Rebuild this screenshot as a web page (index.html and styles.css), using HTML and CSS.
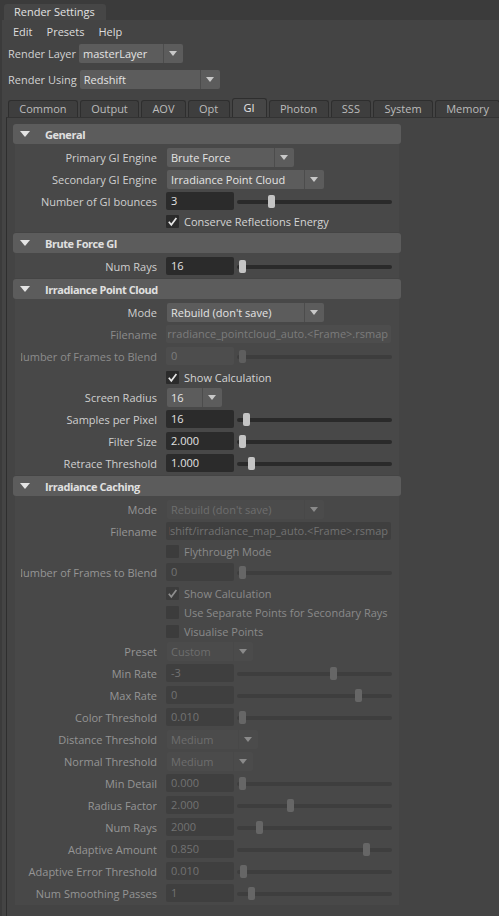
FILE: index.html
```html
<!DOCTYPE html>
<html>
<head>
<meta charset="utf-8">
<title>Render Settings</title>
<link rel="stylesheet" href="styles.css">
</head>
<body>
<div class="titlebar"><div class="title-tab">Render Settings</div></div>
<div class="window">
  <div class="menubar"><span>Edit</span><span>Presets</span><span>Help</span></div>
  <div class="toprow r-layer"><span class="toplabel">Render Layer</span><div class="dd w104"><span class="dd-text">masterLayer</span><span class="dd-arrow"></span></div></div>
  <div class="toprow r-using"><span class="toplabel">Render Using</span><div class="dd w140"><span class="dd-text">Redshift</span><span class="dd-arrow"></span></div></div>
  <div class="tabs">
    <span class="tab">Common</span><span class="tab">Output</span><span class="tab">AOV</span><span class="tab">Opt</span><span class="tab active">GI</span><span class="tab">Photon</span><span class="tab">SSS</span><span class="tab">System</span><span class="tab">Memory</span>
  </div>
  <div class="panel">
    <section class="sec">
      <div class="sec-head"><span class="tri"></span><span class="sec-title">General</span></div>
      <div class="sec-body">
        <div class="row"><div class="lbl"><span>Primary GI Engine</span></div><div class="ctl"><div class="dd w127"><span class="dd-text">Brute Force</span><span class="dd-arrow"></span></div></div></div>
        <div class="row"><div class="lbl"><span>Secondary GI Engine</span></div><div class="ctl"><div class="dd w157"><span class="dd-text">Irradiance Point Cloud</span><span class="dd-arrow"></span></div></div></div>
        <div class="row"><div class="lbl"><span>Number of GI bounces</span></div><div class="ctl"><span class="num">3</span><div class="slider"><span class="knob" style="left:31px"></span></div></div></div>
        <div class="row h19"><div class="lbl"></div><div class="ctl"><span class="cb"><svg viewBox="0 0 13 13"><polyline points="2.8,6.8 5.3,9.8 10.4,3"/></svg></span><span class="cb-text">Conserve Reflections Energy</span></div></div>
      </div>
    </section>
    <section class="sec">
      <div class="sec-head"><span class="tri"></span><span class="sec-title">Brute Force GI</span></div>
      <div class="sec-body">
        <div class="row"><div class="lbl"><span>Num Rays</span></div><div class="ctl"><span class="num">16</span><div class="slider"><span class="knob" style="left:2px"></span></div></div></div>
      </div>
    </section>
    <section class="sec">
      <div class="sec-head"><span class="tri"></span><span class="sec-title">Irradiance Point Cloud</span></div>
      <div class="sec-body">
        <div class="row"><div class="lbl"><span>Mode</span></div><div class="ctl"><div class="dd w157"><span class="dd-text">Rebuild (don't save)</span><span class="dd-arrow"></span></div></div></div>
        <div class="row off"><div class="lbl"><span>Filename</span></div><div class="ctl"><span class="path"><span class="clip"><span>irradiance_pointcloud_auto.&lt;Frame&gt;.rsmap</span></span></span></div></div>
        <div class="row off"><div class="lbl"><span>Number of Frames to Blend</span></div><div class="ctl"><span class="num">0</span><div class="slider"><span class="knob" style="left:2px"></span></div></div></div>
        <div class="row h20"><div class="lbl"></div><div class="ctl"><span class="cb"><svg viewBox="0 0 13 13"><polyline points="2.8,6.8 5.3,9.8 10.4,3"/></svg></span><span class="cb-text">Show Calculation</span></div></div>
        <div class="row h21"><div class="lbl"><span>Screen Radius</span></div><div class="ctl"><div class="dd w55"><span class="dd-text">16</span><span class="dd-arrow"></span></div></div></div>
        <div class="row"><div class="lbl"><span>Samples per Pixel</span></div><div class="ctl"><span class="num">16</span><div class="slider"><span class="knob" style="left:6px"></span></div></div></div>
        <div class="row"><div class="lbl"><span>Filter Size</span></div><div class="ctl"><span class="num">2.000</span><div class="slider"><span class="knob" style="left:2px"></span></div></div></div>
        <div class="row"><div class="lbl"><span>Retrace Threshold</span></div><div class="ctl"><span class="num">1.000</span><div class="slider"><span class="knob" style="left:11px"></span></div></div></div>
      </div>
    </section>
    <section class="sec disabled">
      <div class="sec-head"><span class="tri"></span><span class="sec-title">Irradiance Caching</span></div>
      <div class="sec-body">
        <div class="row"><div class="lbl"><span>Mode</span></div><div class="ctl"><div class="dd w157"><span class="dd-text">Rebuild (don't save)</span><span class="dd-arrow"></span></div></div></div>
        <div class="row"><div class="lbl"><span>Filename</span></div><div class="ctl"><span class="path"><span class="clip"><span>redshift/irradiance_map_auto.&lt;Frame&gt;.rsmap</span></span></span></div></div>
        <div class="row h19"><div class="lbl"></div><div class="ctl"><span class="cb"></span><span class="cb-text">Flythrough Mode</span></div></div>
        <div class="row"><div class="lbl"><span>Number of Frames to Blend</span></div><div class="ctl"><span class="num">0</span><div class="slider"><span class="knob" style="left:2px"></span></div></div></div>
        <div class="row h20"><div class="lbl"></div><div class="ctl"><span class="cb"><svg viewBox="0 0 13 13"><polyline points="2.8,6.8 5.3,9.8 10.4,3"/></svg></span><span class="cb-text">Show Calculation</span></div></div>
        <div class="row h19"><div class="lbl"></div><div class="ctl"><span class="cb"></span><span class="cb-text">Use Separate Points for Secondary Rays</span></div></div>
        <div class="row h19"><div class="lbl"></div><div class="ctl"><span class="cb"></span><span class="cb-text">Visualise Points</span></div></div>
        <div class="row h21"><div class="lbl"><span>Preset</span></div><div class="ctl"><div class="dd w86"><span class="dd-text">Custom</span><span class="dd-arrow"></span></div></div></div>
        <div class="row"><div class="lbl"><span>Min Rate</span></div><div class="ctl"><span class="num">-3</span><div class="slider"><span class="knob" style="left:93px"></span></div></div></div>
        <div class="row"><div class="lbl"><span>Max Rate</span></div><div class="ctl"><span class="num">0</span><div class="slider"><span class="knob" style="left:118px"></span></div></div></div>
        <div class="row"><div class="lbl"><span>Color Threshold</span></div><div class="ctl"><span class="num">0.010</span><div class="slider"><span class="knob" style="left:2px"></span></div></div></div>
        <div class="row"><div class="lbl"><span>Distance Threshold</span></div><div class="ctl"><div class="dd w91"><span class="dd-text">Medium</span><span class="dd-arrow"></span></div></div></div>
        <div class="row"><div class="lbl"><span>Normal Threshold</span></div><div class="ctl"><div class="dd w86"><span class="dd-text">Medium</span><span class="dd-arrow"></span></div></div></div>
        <div class="row"><div class="lbl"><span>Min Detail</span></div><div class="ctl"><span class="num">0.000</span><div class="slider"><span class="knob" style="left:2px"></span></div></div></div>
        <div class="row"><div class="lbl"><span>Radius Factor</span></div><div class="ctl"><span class="num">2.000</span><div class="slider"><span class="knob" style="left:50px"></span></div></div></div>
        <div class="row"><div class="lbl"><span>Num Rays</span></div><div class="ctl"><span class="num">2000</span><div class="slider"><span class="knob" style="left:19px"></span></div></div></div>
        <div class="row"><div class="lbl"><span>Adaptive Amount</span></div><div class="ctl"><span class="num">0.850</span><div class="slider"><span class="knob" style="left:126px"></span></div></div></div>
        <div class="row"><div class="lbl"><span>Adaptive Error Threshold</span></div><div class="ctl"><span class="num">0.010</span><div class="slider"><span class="knob" style="left:3px"></span></div></div></div>
        <div class="row"><div class="lbl"><span>Num Smoothing Passes</span></div><div class="ctl"><span class="num">1</span><div class="slider"><span class="knob" style="left:11px"></span></div></div></div>
      </div>
    </section>
  </div>
</div>
</body>
</html>
```
FILE: styles.css
```css
html, body { margin: 0; padding: 0; }
body {
  background: #3b3b3b;
  font-family: "Open Sans", "Noto Sans", sans-serif;
  font-size: 11px;
  color: #cccccc;
  width: 499px;
  height: 916px;
  overflow: hidden;
}
.titlebar { height: 20px; display: flex; align-items: flex-end; padding-left: 4px; }
.title-tab {
  width: 102px; height: 16px; box-sizing: border-box;
  background: #464646; border-radius: 3px 3px 0 0;
  color: #e2e2e2; line-height: 16px; padding-left: 10px;
}
.window { background: #444444; margin-left: 2px; height: 896px; }
.menubar {
  height: 22px; display: flex; align-items: center;
  padding-left: 11px; gap: 14px; color: #dddddd;
}
.toprow { display: flex; align-items: center; height: 19px; padding-left: 6px; gap: 3px; color: #d2d2d2; }
.r-layer { margin-top: 2px; }
.r-using { margin-top: 7px; }

/* dropdown */
.dd {
  display: flex; height: 19px; box-sizing: border-box;
  background: #5c5c5c; border-radius: 2px; color: #e4e4e4;
}
.dd-text { flex: 1; padding-left: 4px; line-height: 19px; white-space: nowrap; overflow: hidden; }
.dd-arrow {
  width: 19px; border-left: 1px solid #4c4c4c; position: relative; flex-shrink: 0;
}
.dd-arrow::after {
  content: ""; position: absolute; left: 5px; top: 7px;
  border-left: 4.5px solid transparent; border-right: 4.5px solid transparent;
  border-top: 5px solid #c8c8c8;
}
.w55 { width: 55px; }
.w86 { width: 86px; }
.w91 { width: 91px; }
.w104 { width: 104px; }
.w127 { width: 127px; }
.w140 { width: 140px; }
.w157 { width: 157px; }

/* tabs */
.tabs { display: flex; align-items: flex-end; gap: 2px; padding-left: 6px; margin-top: 11px; height: 17px; }
.tab {
  height: 16px; line-height: 16px; box-sizing: content-box;
  padding: 0 10.3px; background: #3e3e3e; color: #bcbcbc;
  border: 1px solid #2e2e2e; border-bottom: none; border-radius: 3px 3px 0 0;
}
.tab.active { background: #464646; color: #e6e6e6; height: 18px; line-height: 18px; position: relative; z-index: 1; padding: 0 11px; }

/* panel */
.panel {
  margin-left: 4px; border-left: 1px solid #2e2e2e; border-top: 1px solid #333333;
  background: #444444; padding: 6px 0 0 6px; height: 800px;
}
.sec { width: 388px; margin-bottom: 1px; }
.sec-head {
  height: 20px; background: #5c5c5c; border-radius: 3px;
  display: flex; align-items: center; color: #e0e0e0;
}
.tri {
  width: 0; height: 0; margin-left: 7px; margin-right: 15px;
  border-left: 5.5px solid transparent; border-right: 5.5px solid transparent;
  border-top: 6px solid #e4e4e4;
}
.sec-title { font-weight: bold; letter-spacing: -0.45px; }
.sec-body { margin: 0 2px; background: #484848; padding: 2px 7px 1px 6px; }

.row { display: grid; grid-template-columns: 136px 1fr; column-gap: 9px; height: 22px; align-items: center; }
.row.h19 { height: 19px; }
.row.h20 { height: 20px; }
.row.h21 { height: 21px; }
.lbl { display: flex; justify-content: flex-end; overflow: hidden; white-space: nowrap; color: #cfcfcf; }
.lbl span { flex-shrink: 0; }
.ctl { display: flex; align-items: center; }
.ctl .dd { margin-left: 1px; }

.num {
  width: 68px; height: 18px; box-sizing: border-box; background: #2b2b2b;
  border-radius: 2px; color: #e2e2e2; line-height: 18px; padding-left: 5px; flex-shrink: 0;
}
.slider { position: relative; width: 155px; height: 13px; margin-left: 3px; }
.slider::before {
  content: ""; position: absolute; left: 0; right: 0; top: 5px; height: 4px;
  background: #2a2a2a; border-radius: 2px;
}
.knob {
  position: absolute; top: 0; width: 7px; height: 13px; border-radius: 2px; background: #c4c4c4;
}
.cb {
  width: 13px; height: 13px; background: #2b2b2b; border-radius: 1px; flex-shrink: 0;
  display: block;
}
.cb svg { display: block; width: 13px; height: 13px; }
.cb polyline { fill: none; stroke: #e6e6e6; stroke-width: 1.7; }
.cb-text { margin-left: 5px; color: #d4d4d4; white-space: nowrap; }
.path {
  width: 225px; height: 18px; box-sizing: border-box; border-radius: 2px;
  display: flex; padding: 0 3px 0 2px; line-height: 18px;
}
.clip { flex: 1; display: flex; justify-content: flex-end; overflow: hidden; white-space: nowrap; }
.clip span { flex-shrink: 0; }

/* individually disabled rows */
.row.off .lbl { color: #8c8c8c; }
.row.off .num, .row.off .path { background: #4d4d4d; color: #7c7c7c; }
.row.off .slider::before { background: #3d3d3d; }
.row.off .knob { background: #5e5e5e; }

/* disabled section */
.disabled .lbl { color: #959595; }
.disabled .cb-text { color: #8a8a8a; }
.disabled .num, .disabled .path { background: #3f3f3f; color: #727272; }
.disabled .path { padding-left: 3px; }
.disabled .slider::before { background: #3e3e3e; }
.disabled .knob { background: #666666; }
.disabled .cb { background: #3c3c3c; }
.disabled .cb polyline { stroke: #8e8e8e; }
.disabled .dd { background: #4b4b4b; color: #6e6e6e; }
.disabled .dd-arrow { border-left-color: #484848; }
.disabled .dd-arrow::after { border-top-color: #8a8a8a; }
```
